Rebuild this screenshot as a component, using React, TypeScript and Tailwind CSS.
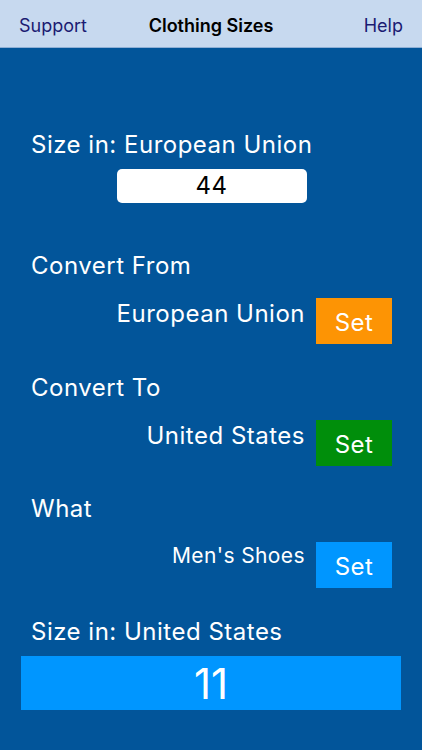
import React from 'react';

const font = { fontFamily: 'Inter, "Noto Sans", sans-serif' };

function SetRow({ label, color, small }: { label: string; color: string; small?: boolean }) {
  return (
    <div className="flex items-start justify-end pr-[30px]">
      <span
        className={
          small
            ? 'mt-[1px] mr-[11px] text-[21px] leading-[26px] tracking-[0.4px] text-white'
            : 'mt-[1px] mr-[11px] text-[24px] leading-[30px] tracking-[0.5px] text-white'
        }
      >
        {label}
      </span>
      <button className={`flex h-[46px] w-[76px] items-center justify-center pt-[3px] text-[24px] tracking-[0.5px] text-white ${color}`}>
        Set
      </button>
    </div>
  );
}

export default function App() {
  return (
    <div className="flex h-[750px] w-[422px] flex-col overflow-hidden bg-[#02559a]" style={font}>
      <header className="grid h-12 shrink-0 grid-cols-[1fr_auto_1fr] items-center border-b border-[#8fb0d6] bg-[#c7d9ef] px-[19px] pt-[3px]">
        <span className="text-[18px] text-[#1b1b72]">Support</span>
        <span className="text-[18px] font-semibold text-black">Clothing Sizes</span>
        <span className="text-right text-[18px] text-[#1b1b72]">Help</span>
      </header>

      <main className="flex flex-col pt-[82px] text-white">
        <div className="px-[31px] text-[24px] leading-[30px] tracking-[0.5px]">Size in: European Union</div>
        <div className="mt-[9px] flex justify-center">
          <div className="ml-[1px] flex h-[34px] w-[190px] items-center justify-center rounded-[5px] bg-white text-[24px] tracking-[0.5px] text-black">
            44
          </div>
        </div>

        <div className="mt-[48px] px-[31px] text-[24px] leading-[30px] tracking-[0.5px]">Convert From</div>
        <div className="mt-[17px]">
          <SetRow label="European Union" color="bg-[#fd9404]" />
        </div>

        <div className="mt-[29px] px-[31px] text-[24px] leading-[30px] tracking-[0.5px]">Convert To</div>
        <div className="mt-[17px]">
          <SetRow label="United States" color="bg-[#008e0b]" />
        </div>

        <div className="mt-[28px] px-[31px] text-[24px] leading-[30px] tracking-[0.5px]">What</div>
        <div className="mt-[18px]">
          <SetRow label="Men's Shoes" color="bg-[#0096ff]" small />
        </div>

        <div className="mt-[29px] px-[31px] text-[24px] leading-[30px] tracking-[0.5px]">Size in: United States</div>
        <div className="mx-[21px] mt-[9px] flex h-[54px] items-center justify-center bg-[#0096ff] text-[42px] text-white">
          11
        </div>
      </main>
    </div>
  );
}
